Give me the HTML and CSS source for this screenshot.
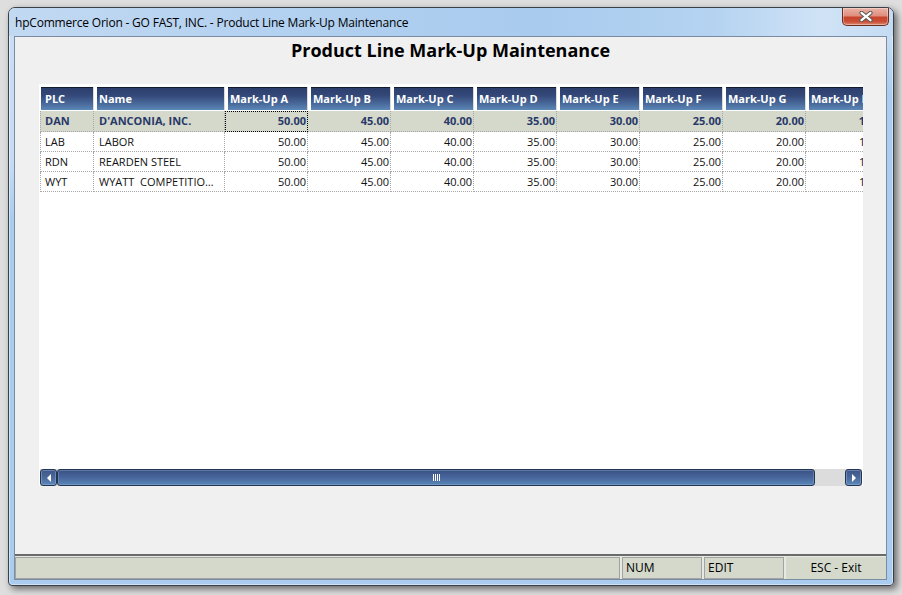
FILE: index.html
```html
<!DOCTYPE html>
<html>
<head>
<meta charset="utf-8">
<title>Product Line Mark-Up Maintenance</title>
<link rel="stylesheet" href="styles.css">
</head>
<body>
<div class="window">
  <div class="titlebar">
    <span class="title-text">hpCommerce Orion - GO FAST, INC. - Product Line Mark-Up Maintenance</span>
    <button class="close" aria-label="Close">
      <svg width="14" height="11" viewBox="0 0 14 11"><path d="M2.5 1.8 L11.5 9.2 M11.5 1.8 L2.5 9.2" stroke="#5a5a5a" stroke-width="4.2" stroke-linecap="round"/><path d="M2.5 1.8 L11.5 9.2 M11.5 1.8 L2.5 9.2" stroke="#ffffff" stroke-width="2.2" stroke-linecap="round"/></svg>
    </button>
  </div>
  <div class="client">
    <h1 class="heading">Product Line Mark-Up Maintenance</h1>
    <div class="grid">
      <div class="grid-view">
        <div class="row head">
          <div class="th first"><div class="hc">PLC</div></div>
          <div class="th"><div class="hc">Name</div></div>
          <div class="th"><div class="hc">Mark-Up A</div></div>
          <div class="th"><div class="hc">Mark-Up B</div></div>
          <div class="th"><div class="hc">Mark-Up C</div></div>
          <div class="th"><div class="hc">Mark-Up D</div></div>
          <div class="th"><div class="hc">Mark-Up E</div></div>
          <div class="th"><div class="hc">Mark-Up F</div></div>
          <div class="th"><div class="hc">Mark-Up G</div></div>
          <div class="th"><div class="hc">Mark-Up H</div></div>
        </div>
        <div class="row sel">
          <div class="td code">DAN</div>
          <div class="td name">D'ANCONIA, INC.</div>
          <div class="td num focus">50.00</div>
          <div class="td num">45.00</div>
          <div class="td num">40.00</div>
          <div class="td num">35.00</div>
          <div class="td num">30.00</div>
          <div class="td num">25.00</div>
          <div class="td num">20.00</div>
          <div class="td num">15.00</div>
        </div>
        <div class="row">
          <div class="td code">LAB</div>
          <div class="td name">LABOR</div>
          <div class="td num">50.00</div>
          <div class="td num">45.00</div>
          <div class="td num">40.00</div>
          <div class="td num">35.00</div>
          <div class="td num">30.00</div>
          <div class="td num">25.00</div>
          <div class="td num">20.00</div>
          <div class="td num">15.00</div>
        </div>
        <div class="row">
          <div class="td code">RDN</div>
          <div class="td name">REARDEN STEEL</div>
          <div class="td num">50.00</div>
          <div class="td num">45.00</div>
          <div class="td num">40.00</div>
          <div class="td num">35.00</div>
          <div class="td num">30.00</div>
          <div class="td num">25.00</div>
          <div class="td num">20.00</div>
          <div class="td num">15.00</div>
        </div>
        <div class="row">
          <div class="td code">WYT</div>
          <div class="td name">WYATT  COMPETITION ENGINES</div>
          <div class="td num">50.00</div>
          <div class="td num">45.00</div>
          <div class="td num">40.00</div>
          <div class="td num">35.00</div>
          <div class="td num">30.00</div>
          <div class="td num">25.00</div>
          <div class="td num">20.00</div>
          <div class="td num">15.00</div>
        </div>
      </div>
      <div class="hscroll-wrap">
        <div class="hscroll">
          <div class="sbtn"><span class="arrow-left"></span></div>
          <div class="thumb"><span class="grip"></span></div>
          <div class="track"></div>
          <div class="sbtn"><span class="arrow-right"></span></div>
        </div>
      </div>
    </div>
    <div class="spacer"></div>
    <div class="statusbar">
      <div class="panel main"></div>
      <div class="panel numlock">NUM</div>
      <div class="panel mode">EDIT</div>
      <div class="panel esc">ESC - Exit</div>
    </div>
  </div>
</div>
</body>
</html>
```
FILE: styles.css
```css
* { box-sizing: border-box; margin: 0; padding: 0; }
html, body { width: 100%; height: 100%; }
body {
  background: #dedede;
  font-family: "Open Sans", "Noto Sans", sans-serif;
  overflow: hidden;
}

.window {
  margin: 7px 0 0 8px;
  width: 886px;
  height: 579px;
  border: 1px solid #3a4047;
  border-radius: 7px 7px 4px 4px;
  padding: 0 6px 5px 5px;
  display: flex;
  flex-direction: column;
  background: linear-gradient(172deg, #cadff5 0%, #c6dcf3 22%, #aacdef 30%, #a9ccef 100%);
  box-shadow: 3px 3px 7px rgba(0,0,0,0.55), inset 0 0 0 1px rgba(255,255,255,0.45);
}

.titlebar {
  height: 28px;
  display: flex;
  align-items: center;
  margin: 0 -6px 0 -5px;
  padding: 0 0 0 6px;
  border-radius: 6px 6px 0 0;
  background: linear-gradient(90deg, #c2d9f2 0%, #b3d1f0 30%, #a9cbee 60%, #b5d3f1 80%, #d0e3f6 92%, #c4dbf3 100%);
}
.title-text {
  font-size: 12px;
  letter-spacing: -0.2px;
  color: #000;
  white-space: nowrap;
}
.close {
  align-self: flex-start;
  margin-left: auto;
  margin-right: 4px;
  width: 47px;
  height: 18px;
  border: 1px solid #6b2c22;
  border-top: none;
  border-radius: 0 0 5px 5px;
  background: linear-gradient(180deg, #eab3a6 0%, #df8f7e 45%, #c9442c 55%, #c94f37 80%, #dc8a70 100%);
  box-shadow: inset 0 0 0 1px rgba(255,255,255,0.35);
  display: flex;
  align-items: center;
  justify-content: center;
}
.close svg { display: block; }

.client {
  flex: 1;
  border: 1px solid #7a8ba2;
  background: #f0f0f0;
  display: flex;
  flex-direction: column;
  min-height: 0;
}

.heading {
  font-size: 18px;
  font-weight: 700;
  line-height: 24px;
  text-align: center;
  color: #000;
  margin: 1px 0 22px;
}

.grid {
  margin: 0 23px 0 24px;
}
.grid-view {
  height: 385px;
  background: #fff;
  overflow: hidden;
  padding-left: 1px;
}
.row {
  display: grid;
  grid-template-columns: 54px 131px repeat(8, 83px);
  width: max-content;
  height: 20px;
  font-size: 11px;
  color: #111;
}
.row.head {
  height: 27px;
  padding-top: 3px;
  padding-bottom: 1px;
}
.th {
  border-right: 1px solid #dadada;
  padding-left: 3px;
}
.th.first { padding-left: 1px; }
.hc {
  height: 23px;
  border-top: 1px solid #121a2e;
  background: linear-gradient(180deg, #2c3e6b 0%, #34497a 35%, #4b6d9e 75%, #5c88b7 100%);
  color: #fff;
  font-weight: 700;
  font-size: 11px;
  line-height: 21px;
  padding-left: 2px;
  white-space: nowrap;
  overflow: hidden;
}
.th.first .hc { padding-left: 4px; }

.td {
  border-right: 1px dotted #a8a8a8;
  border-bottom: 1px dotted #a8a8a8;
  line-height: 19px;
  white-space: pre;
  overflow: hidden;
  text-overflow: ellipsis;
}
.td.code { border-left: 1px dotted #a8a8a8; padding-left: 4px; }
.td.name { padding-left: 5px; padding-right: 4px; }
.td.num { text-align: right; padding-right: 1px; }

.row.sel {
  height: 21px;
  background: #d4d9cb;
  font-weight: 700;
  color: #283868;
}
.row.sel .td { line-height: 20px; }
.td.focus {
  outline: 1px dotted #000;
  outline-offset: -1px;
}

.hscroll-wrap {
  background: #fff;
  padding: 0 1px;
}
.hscroll {
  display: flex;
  height: 17px;
  background: #dcdcdc;
}
.sbtn {
  width: 17px;
  flex: none;
  border: 1px solid #26354f;
  border-radius: 3px;
  background: linear-gradient(180deg, #3d5586 0%, #4a689a 50%, #5d89b8 100%);
  box-shadow: inset 0 0 0 1px rgba(150,185,230,0.45);
  display: flex;
  align-items: center;
  justify-content: center;
}
.arrow-left {
  width: 0; height: 0;
  border-top: 4px solid transparent;
  border-bottom: 4px solid transparent;
  border-right: 4px solid #fff;
}
.arrow-right {
  width: 0; height: 0;
  border-top: 4px solid transparent;
  border-bottom: 4px solid transparent;
  border-left: 4px solid #fff;
}
.thumb {
  width: 758px;
  flex: none;
  border: 1px solid #26354f;
  border-radius: 3px;
  background: linear-gradient(180deg, #3b5283 0%, #46639a 45%, #5a86b6 100%);
  box-shadow: inset 0 0 0 1px rgba(150,185,230,0.35);
  display: flex;
  align-items: center;
  justify-content: center;
}
.grip {
  width: 7px;
  height: 7px;
  background: repeating-linear-gradient(90deg, #fff 0 1px, transparent 1px 2px);
}
.track { flex: 1; }

.spacer { flex: 1; }

.statusbar {
  height: 25px;
  border-top: 2px solid #6a6a6a;
  padding-top: 1px;
  display: flex;
  gap: 2px;
  background: #e6e8e2;
}
.panel {
  height: 22px;
  border: 1px solid #a3a3a3;
  background: #d4d9cb;
  font-size: 12px;
  line-height: 20px;
  padding-left: 3px;
  color: #000;
  white-space: nowrap;
}
.panel.main { width: 605px; }
.panel.numlock { width: 80px; }
.panel.mode { width: 80px; }
.panel.esc {
  flex: 1;
  border-color: #d4d9cb;
  text-align: center;
  padding-left: 0;
}
```
